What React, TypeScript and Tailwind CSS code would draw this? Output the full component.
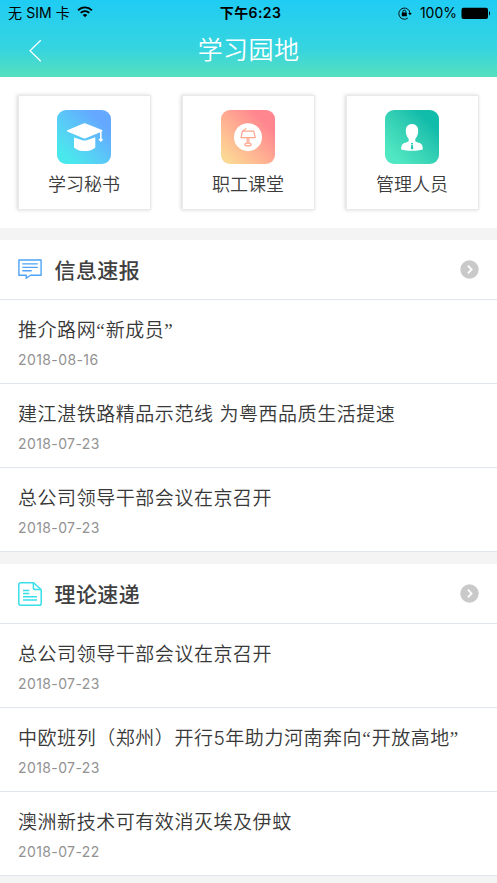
import type { ReactNode } from 'react'

interface Article {
  title: string
  date: string
}

const newsArticles: Article[] = [
  { title: '推介路网“新成员”', date: '2018-08-16' },
  { title: '建江湛铁路精品示范线 为粤西品质生活提速', date: '2018-07-23' },
  { title: '总公司领导干部会议在京召开', date: '2018-07-23' },
]

const theoryArticles: Article[] = [
  { title: '总公司领导干部会议在京召开', date: '2018-07-23' },
  { title: '中欧班列（郑州）开行5年助力河南奔向“开放高地”', date: '2018-07-23' },
  { title: '澳洲新技术可有效消灭埃及伊蚊', date: '2018-07-22' },
]

function WifiIcon() {
  return (
    <svg width="16" height="12" viewBox="0 0 16 12" fill="none" stroke="#000" strokeWidth="1.8">
      <path d="M1.1 4.3a9.8 9.8 0 0 1 13.8 0" />
      <path d="M3.7 6.8a6.1 6.1 0 0 1 8.6 0" />
      <path d="M8 11.3 5.7 9a3.3 3.3 0 0 1 4.6 0z" fill="#000" stroke="none" />
    </svg>
  )
}

function RotationLockIcon() {
  return (
    <svg width="14" height="13" viewBox="0 0 14 13" fill="none" stroke="#000">
      <path d="M9.8 11.1A5.6 5.6 0 1 1 12 6.3" strokeWidth="0.9" />
      <path d="M10.2 5.9h3.6l-1.8 2.3z" fill="#000" stroke="none" />
      <rect x="3.8" y="5.6" width="5" height="3.7" rx="0.4" fill="#000" stroke="none" />
      <path d="M4.8 5.8V4.7a1.5 1.5 0 0 1 3 0v1.1" strokeWidth="0.9" />
    </svg>
  )
}

function BatteryIcon() {
  return (
    <svg width="30" height="13" viewBox="0 0 30 13">
      <rect x="0.5" y="0.7" width="26.5" height="11.4" rx="2" fill="#000" />
      <path d="M28 4.2c1.4.5 1.4 3.7 0 4.2z" fill="#000" />
    </svg>
  )
}

function CapIcon() {
  return (
    <svg width="54" height="54" viewBox="0 0 54 54" fill="#fff">
      <path d="M26.4 13.4q1.2-.5 2.4 0L45 20q1.2.7 0 1.4l-16.2 6.8q-1.2.5-2.4 0L10.3 21.6q-1.1-.7 0-1.4z" />
      <path d="M17 27.4l9.2 3q1.4.4 2.8 0l9.3-3.2v10.2c-4.3 4.8-17 4.8-21.3 0z" />
      <path d="M43 21h1.6v7.2l1.5 1.6-2.3 2.2-2.3-2.2 1.5-1.6z" />
    </svg>
  )
}

function LecternIcon() {
  return (
    <svg width="54" height="54" viewBox="0 0 54 54" fill="none" stroke="#fda58e" strokeWidth="1.2" strokeLinejoin="round" strokeLinecap="round">
      <circle cx="27" cy="27.2" r="14" fill="#fff" stroke="none" />
      <path d="M21.4 21.2h11.4l1.4 6.4H20z" />
      <path d="M22.2 20.8l2.8-2.2M26.2 28.2v5M27.9 28.2v5" />
      <ellipse cx="27" cy="34.4" rx="3.2" ry="1.4" />
    </svg>
  )
}

function ManagerIcon() {
  return (
    <svg width="54" height="54" viewBox="0 0 54 54" fill="#fff">
      <path d="M27 14c4.1 0 6.4 3 6.2 7.2-.1 3.2-1.2 5.8-2.8 7.6-.5 2.5.2 3.2 3.3 3.9 3 .7 4 2.1 4.1 6.7-5.7 1.8-15.9 1.8-21.6 0 .1-4.6 1.1-6 4.1-6.7 3.1-.7 3.8-1.4 3.3-3.9-1.6-1.8-2.7-4.4-2.8-7.6C20.6 17 22.9 14 27 14z" />
      <path d="M25.9 32.9h2.3l-.4 1.6h-1.5zM26.2 35.1h1.7l.5 3.7-1.3.8-1.3-.8z" fill="#2ccab5" />
    </svg>
  )
}

function MessageIcon() {
  return (
    <svg width="24" height="21" viewBox="0 0 24 21" fill="none" stroke="#4fa3f5" strokeWidth="1.4" strokeLinejoin="round">
      <path d="M.9 1h22.2v15.2H12.5L8.2 19.3v-3.1H.9z" />
      <path d="M4.3 4.9h15.5M4.3 8.4h15.5M4.3 11.8h9.4" />
    </svg>
  )
}

function DocumentIcon() {
  return (
    <svg width="24" height="24" viewBox="0 0 24 24" fill="none" stroke="#36dfea" strokeWidth="1.5" strokeLinejoin="round">
      <path d="M2.5.8h13.1l7.6 7v13.6q0 1.8-1.8 1.8H2.5Q.8 23.2.8 21.4V2.5Q.8.8 2.5.8z" />
      <path d="M15.4.9v4.9q0 1.8 1.8 1.8h5.9M5 8.4h6.3M5 11.6h6.3M5 14.8h14M5 18h14" />
    </svg>
  )
}

function ArrowBadge() {
  return (
    <svg width="19" height="19" viewBox="0 0 19 19" fill="none">
      <circle cx="9.5" cy="9.5" r="9.2" fill="#c9c9c9" />
      <path d="M7.9 5.7l3.7 3.8-3.7 3.8" stroke="#fff" strokeWidth="1.8" />
    </svg>
  )
}

function MenuCard({ label, tile, children }: { label: string; tile: string; children: ReactNode }) {
  return (
    <button className="flex h-[115px] w-[133px] flex-col items-center border border-[#e9e9e9] bg-white pt-[14px] pr-px shadow-[-1px_0_4px_rgba(0,0,0,0.16)]">
      <span className={`h-[54px] w-[54px] overflow-hidden rounded-[9px] ${tile}`}>{children}</span>
      <span className="mt-[6px] text-[18px] leading-[26px] font-[350] text-[#3c3c3c]">{label}</span>
    </button>
  )
}

// curly quotes are set narrow, so they do not take a full CJK cell
function ArticleTitle({ text }: { text: string }) {
  return (
    <p className="h-7 font-['Inter','Noto_Sans_CJK_SC',sans-serif] text-[19px] leading-7 font-[350] tracking-[0.55px] whitespace-nowrap text-[#383838]">
      {text.split(/([“”])/).map((part, i) =>
        part === '“' || part === '”' ? (
          <span key={i} className="font-['Liberation_Serif',serif] leading-none tracking-[1px]">{part}</span>
        ) : (
          part
        ),
      )}
    </p>
  )
}

function ArticleSection({ title, icon, articles }: { title: string; icon: ReactNode; articles: Article[] }) {
  return (
    <section className="mt-3 bg-white">
      <div className="flex h-[60px] items-center border-b-[1.5px] border-[#e0e6ec] px-[18px]">
        {icon}
        <h2 className="mb-[2px] ml-[12.5px] flex-1 text-[21px] leading-[30px] font-medium tracking-[0.4px] text-[#404040]">{title}</h2>
        <ArrowBadge />
      </div>
      {articles.map((article) => (
        <div key={article.title} className="h-[84px] border-b-[1.5px] border-[#e0e6ec] px-[18px] pt-[17px]">
          <ArticleTitle text={article.title} />
          <p className="mt-[5px] font-['Inter',sans-serif] text-[14px] leading-5 tracking-[0.4px] text-[#929292]">{article.date}</p>
        </div>
      ))}
    </section>
  )
}

export default function App() {
  return (
    <div className="h-[883px] w-[497px] overflow-hidden bg-[#f4f4f4] font-['Noto_Sans_CJK_SC',sans-serif]">
      <header className="h-[77px] bg-linear-to-b from-[#1fccf4] via-[#36d5de] via-65% to-[#55dfbd]">
        <div className="grid h-[26px] grid-cols-[1fr_auto_1fr] items-center pr-[6px] pl-2 font-['Inter','Noto_Sans_CJK_SC',sans-serif] text-[14px] leading-5 text-black">
          <div className="flex items-center gap-[7px]">
            <span className="tracking-[0.1px]">无 SIM 卡</span>
            <span className="mb-[2px]">
              <WifiIcon />
            </span>
          </div>
          <span className="pl-[2px] text-center font-semibold tracking-[0.4px]">下午6:23</span>
          <div className="flex items-center justify-end">
            <RotationLockIcon />
            <span className="mr-1 ml-2">100%</span>
            <BatteryIcon />
          </div>
        </div>
        <div className="grid h-[47px] grid-cols-[70px_1fr_70px] items-center">
          <button className="pt-[2px] pl-7" aria-label="返回">
            <svg width="14" height="23" viewBox="0 0 14 23" fill="none" stroke="#fff" strokeWidth="1.2">
              <path d="M12.8 1.2 2 11.8l10.8 10.4" />
            </svg>
          </button>
          <h1 className="mb-[3px] text-center text-[25px] leading-9 font-[350] tracking-[0.4px] text-white">学习园地</h1>
        </div>
      </header>

      <nav className="flex h-[151px] justify-between bg-white px-[18px] pt-[18px]">
        <MenuCard label="学习秘书" tile="bg-linear-to-tr from-[#49e8ec] from-15% to-[#64a8ff] to-80%">
          <CapIcon />
        </MenuCard>
        <MenuCard label="职工课堂" tile="bg-linear-to-tr from-[#fbd794] from-10% to-[#ff858f] to-80%">
          <LecternIcon />
        </MenuCard>
        <MenuCard label="管理人员" tile="bg-linear-to-tr from-[#50e8c2] from-15% to-[#10bcaa] to-80%">
          <ManagerIcon />
        </MenuCard>
      </nav>

      <ArticleSection title="信息速报" icon={<MessageIcon />} articles={newsArticles} />
      <ArticleSection title="理论速递" icon={<DocumentIcon />} articles={theoryArticles} />
    </div>
  )
}
